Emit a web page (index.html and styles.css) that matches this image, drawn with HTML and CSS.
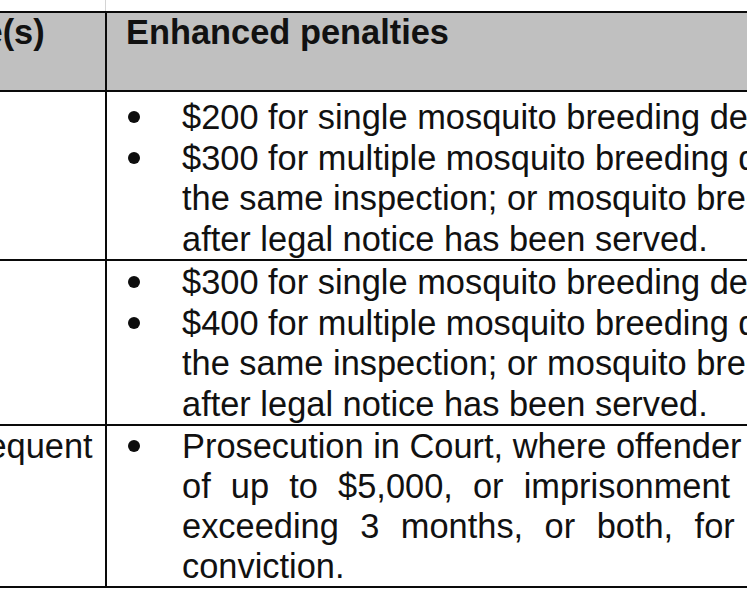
FILE: index.html
```html
<!DOCTYPE html>
<html lang="en">
<head>
<meta charset="utf-8">
<title>Enhanced penalties</title>
<link rel="stylesheet" href="styles.css">
</head>
<body>
<div class="page">
  <div class="stub"></div>
  <table class="penalties">
    <colgroup>
      <col class="c-stage">
      <col class="c-pen">
    </colgroup>
    <thead>
      <tr>
        <th class="col-stage">Stage(s)</th>
        <th class="col-pen">Enhanced penalties</th>
      </tr>
    </thead>
    <tbody>
      <tr class="row-first">
        <td class="col-stage">1st</td>
        <td class="col-pen">
          <ul class="bullets">
            <li><span class="dot"></span><div class="lines"><span class="line">$200 for single mosquito breeding detected</span></div></li>
            <li><span class="dot"></span><div class="lines"><span class="line">$300 for multiple mosquito breeding detected during</span><span class="line">the same inspection; or mosquito breeding detected</span><span class="line">after legal notice has been served.</span></div></li>
          </ul>
        </td>
      </tr>
      <tr class="row-second">
        <td class="col-stage">2nd</td>
        <td class="col-pen">
          <ul class="bullets">
            <li><span class="dot"></span><div class="lines"><span class="line">$300 for single mosquito breeding detected</span></div></li>
            <li><span class="dot"></span><div class="lines"><span class="line">$400 for multiple mosquito breeding detected during</span><span class="line">the same inspection; or mosquito breeding detected</span><span class="line">after legal notice has been served.</span></div></li>
          </ul>
        </td>
      </tr>
      <tr class="row-third">
        <td class="col-stage">Subsequent</td>
        <td class="col-pen">
          <ul class="bullets">
            <li><span class="dot"></span><div class="lines"><span class="line">Prosecution in Court, where offender is liable to a fine</span><span class="line stretch-a">of up to $5,000, or imprisonment for a term not</span><span class="line stretch-b">exceeding 3 months, or both, for each</span><span class="line">conviction.</span></div></li>
          </ul>
        </td>
      </tr>
    </tbody>
  </table>
</div>
</body>
</html>
```
FILE: styles.css
```css
html, body {
  margin: 0;
  padding: 0;
  background: #ffffff;
}

.page {
  width: 747px;
  height: 598px;
  overflow: hidden;
  font-family: "Liberation Sans", Arial, sans-serif;
  font-size: 34.4px;
  color: #111111;
}

.stub {
  width: 1px;
  height: 11px;
  margin-left: 105px;
  background: #d4d4d4;
}

.penalties {
  table-layout: fixed;
  width: 1210px;
  border-collapse: separate;
  border-spacing: 0;
  margin-left: -101px;
  border-top: 2px solid #0a0a0a;
  border-left: 2px solid #0a0a0a;
}

.c-stage {
  width: 206px;
}

.c-pen {
  width: 1002px;
}

.penalties th,
.penalties td {
  box-sizing: border-box;
  border-right: 2px solid #0a0a0a;
  border-bottom: 2px solid #0a0a0a;
  vertical-align: top;
  text-align: left;
  white-space: nowrap;
  overflow: hidden;
}

.penalties th {
  background: #c0c0c0;
  font-weight: bold;
  line-height: 34px;
  padding-top: 2px;
  padding-bottom: 41px;
}

.penalties td {
  line-height: 40.5px;
}

.col-stage {
  padding-left: 8px;
  padding-right: 0;
}

td.col-pen {
  padding-left: 21px;
  padding-right: 0;
}

th.col-pen {
  padding-left: 19px;
  padding-right: 0;
}

.row-first td {
  padding-top: 5px;
  padding-bottom: 0;
}

.row-second td {
  padding-top: 1px;
  padding-bottom: 0;
}

.row-third td {
  padding-top: 0;
  padding-bottom: 0;
  line-height: 40px;
}

.bullets {
  list-style: none;
  margin: 0;
  padding: 0;
}

.bullets li {
  display: flex;
  align-items: flex-start;
}

.dot {
  flex: 0 0 auto;
  width: 12px;
  height: 12px;
  margin-top: 14px;
  margin-right: 42px;
  border-radius: 50%;
  background: #0d0d0d;
}

.lines {
  display: flex;
  flex-direction: column;
}

.line {
  display: block;
  white-space: nowrap;
}

.stretch-a {
  word-spacing: 10.6px;
}

.stretch-b {
  word-spacing: 11.9px;
}
```
